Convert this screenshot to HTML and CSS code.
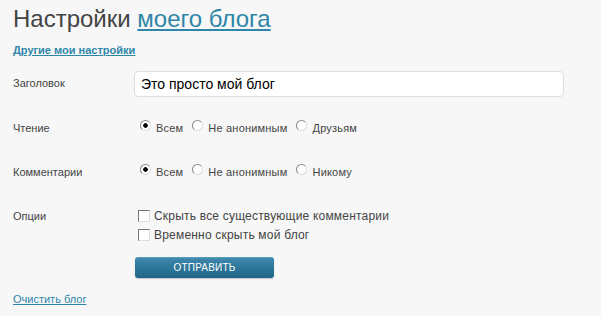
FILE: index.html
```html
<!DOCTYPE html>
<html lang="ru">
<head>
    <meta charset="UTF-8">
    <title>Настройки моего блога</title>
    <link rel="stylesheet" href="styles.css">
</head>
<body>
    <h1>Настройки <a href="#">моего блога</a></h1>
    <a class="other-link" href="#">Другие мои настройки</a>

    <form class="settings">
        <div class="row row-title">
            <label class="label" for="blog-title">Заголовок</label>
            <input type="text" id="blog-title" class="text-input" value="Это просто мой блог">
        </div>

        <div class="row row-radio">
            <span class="label">Чтение</span>
            <div class="choices">
                <label class="choice"><input type="radio" name="read" checked> Всем</label>
                <label class="choice"><input type="radio" name="read"> Не анонимным</label>
                <label class="choice"><input type="radio" name="read"> Друзьям</label>
            </div>
        </div>

        <div class="row row-radio">
            <span class="label">Комментарии</span>
            <div class="choices">
                <label class="choice"><input type="radio" name="comments" checked> Всем</label>
                <label class="choice"><input type="radio" name="comments"> Не анонимным</label>
                <label class="choice"><input type="radio" name="comments"> Никому</label>
            </div>
        </div>

        <div class="row row-options">
            <span class="label">Опции</span>
            <div class="checks">
                <label class="check"><input type="checkbox"> Скрыть все существующие комментарии</label>
                <label class="check"><input type="checkbox"> Временно скрыть мой блог</label>
            </div>
        </div>

        <div class="row row-submit">
            <span class="label"></span>
            <button type="submit">Отправить</button>
        </div>
    </form>

    <a class="clear-link" href="#">Очистить блог</a>
</body>
</html>
```

FILE: styles.css
```css
:root {
    --link: #2e86a8;
    --text: #444444;
    --background: #f7f7f7;
}
body {
    margin: 0;
    padding: 0 13px;
    background: var(--background);
    color: var(--text);
    font-family: 'Liberation Sans', Arial, sans-serif;
    font-size: 11px;
}
a {
    color: var(--link);
}
h1 {
    margin: 0;
    padding-top: 5px;
    font-size: 24px;
    line-height: 28px;
    font-weight: normal;
    color: var(--text);
}
h1 a {
    text-decoration-thickness: 2px;
    text-underline-offset: 2px;
}
.other-link {
    display: block;
    margin-top: 10px;
    line-height: 14px;
    font-weight: bold;
    font-size: 11px;
}
.settings {
    margin-top: 14px;
}
.row {
    display: flex;
    align-items: center;
}
.label {
    width: 121px;
    flex-shrink: 0;
}
.row-title .label {
    align-self: flex-start;
    padding-top: 6px;
}
.text-input {
    width: 430px;
    height: 26px;
    box-sizing: border-box;
    border: 1px solid #dedede;
    border-radius: 4px;
    background: #fff;
    padding: 0 6px;
    font-family: 'Liberation Sans', Arial, sans-serif;
    font-size: 14px;
    color: #000;
    outline: none;
}
.row-radio {
    height: 22px;
    margin-top: 20px;
}
.row-radio + .row-radio {
    margin-top: 22px;
}
.choices {
    display: flex;
    gap: 9px;
    padding-left: 6px;
    letter-spacing: 0.2px;
}
.choice {
    display: flex;
    align-items: center;
    gap: 5px;
}
.choice input {
    appearance: none;
    margin: 0;
    width: 11px;
    height: 11px;
    border-radius: 50%;
    border: 1px solid;
    border-color: #888 #ddd #ddd #888;
    background: #fff;
    position: relative;
    top: -3px;
}
.choice input:checked {
    background: radial-gradient(circle, #000 0 2px, #fff 2.5px);
}
.row-options {
    align-items: flex-start;
    margin-top: 23px;
}
.row-options .label {
    padding-top: 4px;
}
.checks {
    display: flex;
    flex-direction: column;
    padding-left: 4px;
}
.check {
    display: flex;
    align-items: center;
    gap: 4px;
    height: 19px;
    font-size: 12px;
    letter-spacing: 0.2px;
}
.check input {
    appearance: none;
    margin: 0;
    width: 12px;
    height: 12px;
    border: 1px solid;
    border-color: #777 #ddd #ddd #777;
    background: #fff;
}
.row-submit {
    margin-top: 13px;
}
button {
    width: 139px;
    height: 21px;
    margin-left: 1px;
    border: none;
    border-radius: 3px;
    background: linear-gradient(#5b9fc0 0, #3b86aa 2px, #2e7799 50%, #20668a 100%);
    box-shadow: 0 1px 1px rgba(0, 0, 0, 0.2);
    color: #fff;
    font-family: 'Liberation Sans', Arial, sans-serif;
    font-size: 10px;
    letter-spacing: 0.2px;
    text-transform: uppercase;
    cursor: pointer;
}
.clear-link {
    display: block;
    margin-top: 14px;
    line-height: 14px;
    font-size: 11px;
}
```
